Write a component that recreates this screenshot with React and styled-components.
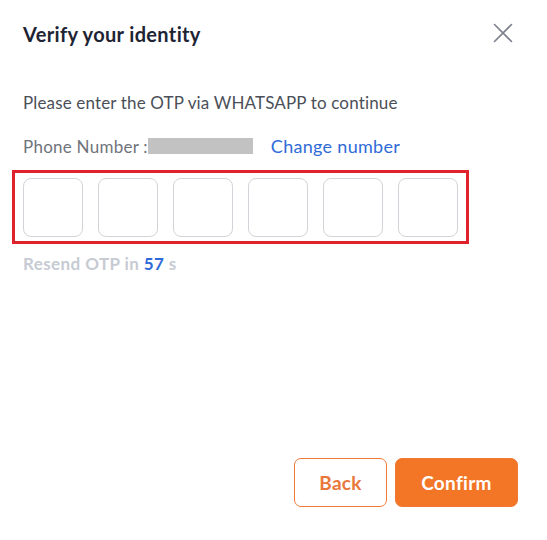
import styled, { createGlobalStyle } from "styled-components";

const GlobalStyle = createGlobalStyle`
  html, body {
    margin: 0;
    padding: 0;
    background: #ffffff;
  }
  body {
    font-family: "Lato", "Liberation Sans", sans-serif;
  }
`;

export default function App() {
  const digits = ["", "", "", "", "", ""];

  return (
    <>
      <GlobalStyle />
      <Dialog>
        <Header>
          <Title>Verify your identity</Title>
          <CloseButton aria-label="Close">
            <svg width="20" height="20" viewBox="0 0 20 20">
              <path
                d="M1.5 1.5 L18.5 18.5 M18.5 1.5 L1.5 18.5"
                stroke="#7a7f8a"
                strokeWidth="1.6"
                strokeLinecap="round"
              />
            </svg>
          </CloseButton>
        </Header>

        <Body>
          <Intro>Please enter the OTP via WHATSAPP to continue</Intro>
          <PhoneRow>
            <PhoneLabel>Phone Number :</PhoneLabel>
            <Masked />
            <ChangeLink>Change number</ChangeLink>
          </PhoneRow>

          <OtpFrame>
            {digits.map((d, i) => (
              <OtpBox key={i} maxLength={1} defaultValue={d} />
            ))}
          </OtpFrame>

          <Resend>
            Resend OTP in <Count>57</Count> s
          </Resend>
        </Body>

        <Footer>
          <Button>Back</Button>
          <Button $primary>Confirm</Button>
        </Footer>
      </Dialog>
    </>
  );
}

const Dialog = styled.div`
  width: 547px;
  height: 540px;
  box-sizing: border-box;
  padding: 20px 29px 33px 23px;
  display: flex;
  flex-direction: column;
  background: #ffffff;
`;

const Header = styled.div`
  display: flex;
  align-items: center;
  justify-content: space-between;
  height: 28px;
`;

const Title = styled.h2`
  margin: 0;
  font-size: 20px;
  font-weight: 700;
  color: #1e2433;
  letter-spacing: 0.35px;
`;

const CloseButton = styled.button`
  border: none;
  background: none;
  padding: 0;
  margin-right: 5px;
  margin-top: -3px;
  width: 20px;
  height: 20px;
  display: flex;
  cursor: pointer;
`;

const Body = styled.div`
  display: flex;
  flex-direction: column;
  flex: 1;
  padding-top: 43px;
`;

const Intro = styled.p`
  margin: 0;
  font-size: 17px;
  color: #4b4f58;
  line-height: 24px;
  letter-spacing: 0.15px;
`;

const PhoneRow = styled.div`
  display: flex;
  align-items: center;
  margin-top: 19px;
  height: 24px;
`;

const PhoneLabel = styled.span`
  font-size: 17px;
  color: #6f737b;
  letter-spacing: 0.25px;
`;

const Masked = styled.span`
  width: 105px;
  height: 16px;
  background: #c2c2c2;
`;

const ChangeLink = styled.a`
  margin-left: 18px;
  font-size: 18px;
  color: #2f6bd8;
  letter-spacing: 0.3px;
  cursor: pointer;
`;

const OtpFrame = styled.div`
  display: flex;
  gap: 15px;
  margin-top: 12px;
  margin-left: -11px;
  width: fit-content;
  padding: 5px 8px 4px 8px;
  border: 3px solid #e0222d;
`;

const OtpBox = styled.input`
  width: 60px;
  height: 59px;
  box-sizing: border-box;
  border: 1px solid #d3d4d9;
  border-radius: 8px;
  outline: none;
  text-align: center;
  font-size: 22px;
  font-family: inherit;
`;

const Resend = styled.div`
  margin-top: 9px;
  font-size: 17px;
  font-weight: 700;
  color: #c7cbd3;
  letter-spacing: 0.4px;
`;

const Count = styled.span`
  color: #2f6bd8;
`;

const Footer = styled.div`
  display: flex;
  justify-content: flex-end;
  gap: 8px;
`;

const Button = styled.button`
  height: 49px;
  padding: 0 22px;
  border-radius: 7px;
  font-family: inherit;
  font-size: 19px;
  font-weight: 700;
  letter-spacing: 0.3px;
  cursor: pointer;
  border: 1px solid #f07a35;
  background: ${(p) => (p.$primary ? "#f37526" : "#ffffff")};
  color: ${(p) => (p.$primary ? "#ffffff" : "#e9773a")};
  min-width: ${(p) => (p.$primary ? "123px" : "93px")};
`;
